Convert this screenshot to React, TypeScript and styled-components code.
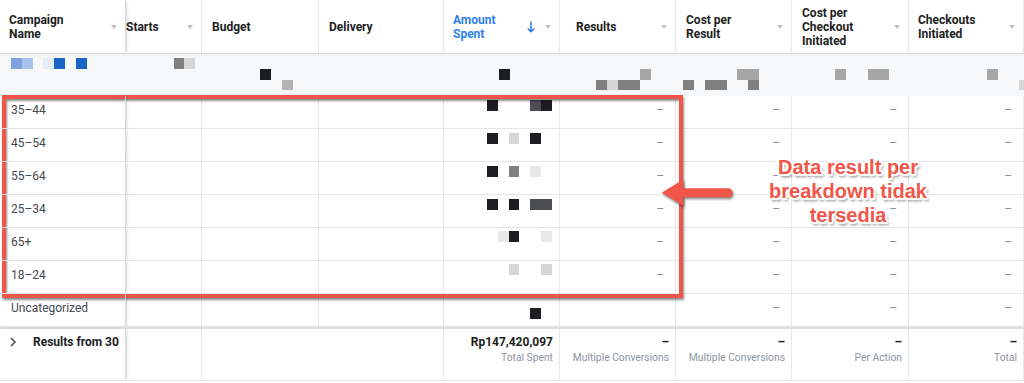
import React from 'react';
import styled, { createGlobalStyle } from 'styled-components';

const COLS = '126px 76px 117px 125px 116px 116px 116px 117px 115px';
const LINE = '#e5e6e9';
const ANNOT = '#f0564a';

const GlobalStyle = createGlobalStyle`
  html, body {
    margin: 0;
    padding: 0;
    background: #fff;
    font-family: Roboto, "Liberation Sans", Arial, sans-serif;
  }
`;

const Page = styled.div`
  position: relative;
  width: 1024px;
  height: 383px;
  overflow: hidden;
  background: #fff;
`;

const Row = styled.div`
  display: grid;
  grid-template-columns: ${COLS};
  box-sizing: border-box;
`;

const HeadRow = styled(Row)`
  height: 54px;
  border-bottom: 1px solid #dadde1;
  box-shadow: 0 1px 2px rgba(0, 0, 0, 0.06);
  position: relative;
  z-index: 2;
`;

const HeadCell = styled.div<{ $indent?: number; $frozen?: boolean }>`
  display: flex;
  align-items: center;
  padding: 0 8px 0 ${p => (p.$indent ?? 10)}px;
  border-right: 1px solid ${LINE};
  font-weight: 700;
  font-size: 12px;
  line-height: 14px;
  color: #1c1e21;
  overflow: hidden;
  white-space: nowrap;
  ${p => p.$frozen && 'box-shadow: 2px 0 2px -1px rgba(0,0,0,0.16); position: relative; z-index: 1; border-right-color: #d8dade;'}
`;

const HeadLabel = styled.span<{ $active?: boolean }>`
  flex: 1;
  color: ${p => (p.$active ? '#2f7fe8' : '#1c1e21')};
`;

const Caret = styled.span`
  width: 0;
  height: 0;
  border-left: 3.5px solid transparent;
  border-right: 3.5px solid transparent;
  border-top: 4px solid #bcc0c6;
  flex: none;
`;

const SortIcon = styled.svg`
  flex: none;
  margin-right: 10px;
`;

const CampaignRow = styled.div`
  height: 42px;
  box-sizing: border-box;
  padding-top: 4px;
  background: #f7f8fa;
  overflow: hidden;
`;

const Mosaic = styled.div<{ $cols: number; $top?: number }>`
  display: grid;
  grid-template-columns: repeat(${p => p.$cols}, 10.85px);
  grid-auto-rows: 10.8px;
  margin-top: ${p => p.$top ?? 0}px;
`;

const Tile = styled.span<{ $c: string }>`
  background: ${p => p.$c};
`;

const DataRow = styled(Row)`
  height: 33px;
`;

const Cell = styled.div<{ $right?: boolean; $frozen?: boolean }>`
  box-sizing: border-box;
  border-right: 1px solid ${LINE};
  border-bottom: 1px solid ${LINE};
  padding: 6px 11px 0;
  font-size: 12px;
  line-height: 16px;
  color: #444950;
  text-align: ${p => (p.$right ? 'right' : 'left')};
  white-space: nowrap;
  overflow: hidden;
  ${p => p.$frozen && 'box-shadow: 2px 0 2px -1px rgba(0,0,0,0.16); position: relative; z-index: 1; border-right-color: #d8dade;'}
`;

const AmountCell = styled(Cell)`
  display: flex;
  justify-content: flex-end;
  padding: 0 7px 0 0;
`;

const Dash = styled.span`
  color: #8d949e;
`;

const TotalRow = styled(Row)`
  height: 54px;
  border-top: 2px solid #dcdee2;
  border-bottom: 1px solid ${LINE};
  box-shadow: 0 -1px 2px rgba(0, 0, 0, 0.05);
`;

const TotalCell = styled.div<{ $span?: number; $frozen?: boolean }>`
  grid-column: span ${p => p.$span ?? 1};
  border-right: 1px solid ${LINE};
  padding: 5px 6px 0;
  text-align: right;
  overflow: hidden;
  white-space: nowrap;
  ${p => p.$frozen && 'box-shadow: 2px 0 2px -1px rgba(0,0,0,0.16); position: relative; z-index: 1; border-right-color: #d8dade; text-align: left; padding-left: 10px;'}
`;

const Figure = styled.div`
  font-weight: 700;
  font-size: 12px;
  line-height: 16px;
  color: #1c1e21;
`;

const SummaryTitle = styled.div`
  display: flex;
  align-items: center;
  gap: 17px;
  overflow: hidden;
  font-weight: 700;
  font-size: 12px;
  line-height: 16px;
  color: #1c1e21;
`;

const Chevron = styled.svg`
  flex: none;
`;

const Caption = styled.div`
  font-size: 10.3px;
  line-height: 16px;
  color: #8d949e;
`;

const RedBox = styled.div`
  position: absolute;
  left: 2px;
  top: 95px;
  width: 681px;
  height: 203px;
  box-sizing: border-box;
  border: 4px solid ${ANNOT};
  filter: drop-shadow(1px 2px 1px rgba(0, 0, 0, 0.45));
  pointer-events: none;
`;

const Arrow = styled.svg`
  position: absolute;
  left: 655px;
  top: 172px;
  filter: drop-shadow(1px 2px 1px rgba(0, 0, 0, 0.45));
`;

const Callout = styled.div`
  position: absolute;
  left: 748px;
  top: 155px;
  width: 200px;
  text-align: center;
  font-family: "Liberation Sans", Arial, sans-serif;
  font-weight: 700;
  font-size: 20px;
  line-height: 24px;
  color: ${ANNOT};
  text-shadow:
    -2px 0 0 #fff, 2px 0 0 #fff, 0 -2px 0 #fff, 0 2px 0 #fff,
    -1.5px -1.5px 0 #fff, 1.5px -1.5px 0 #fff, -1.5px 1.5px 0 #fff, 1.5px 1.5px 0 #fff,
    2px 3px 3px rgba(0, 0, 0, 0.55);
`;

const PALETTE: Record<string, string> = {
  K: '#1c1e21',
  D: '#4d4e52',
  M: '#808080',
  G: '#a6a6a6',
  S: '#b3b3b3',
  L: '#d6d6d6',
  W: '#e8e8e8',
  b: '#1b65c9',
  p: '#7da2de',
  q: '#a8c2ec',
  r: '#e4ecf8',
  '.': 'transparent',
};

const line = (n: number, marks: Record<number, string>) =>
  Array.from({ length: n }, (_, i) => marks[i] ?? '.').join('');

const CAMPAIGN_PIXELS = [
  line(95, { 1: 'p', 2: 'q', 4: 'r', 5: 'b', 7: 'b', 16: 'M', 17: 'L' }),
  line(95, { 24: 'K', 46: 'K', 59: 'G', 68: 'G', 69: 'G', 77: 'G', 80: 'G', 81: 'G', 91: 'G' }),
  line(95, { 26: 'S', 55: 'M', 56: 'L', 57: 'M', 58: 'M', 63: 'M', 65: 'M', 66: 'M', 69: 'M', 94: 'L' }),
];

const Pixels = ({ rows, top }: { rows: string[]; top?: number }) => (
  <Mosaic $cols={rows[0].length} $top={top}>
    {rows.join('').split('').map((ch, i) => (
      <Tile key={i} $c={PALETTE[ch]} />
    ))}
  </Mosaic>
);

const headers = [
  { lines: ['Campaign', 'Name'], caret: true, indent: 9 },
  { lines: ['Starts'], caret: true, indent: 0 },
  { lines: ['Budget'] },
  { lines: ['Delivery'] },
  { lines: ['Amount', 'Spent'], caret: true, active: true, indent: 9 },
  { lines: ['Results'], caret: true, indent: 16 },
  { lines: ['Cost per', 'Result'], caret: true },
  { lines: ['Cost per', 'Checkout', 'Initiated'], caret: true },
  { lines: ['Checkouts', 'Initiated'], caret: true, indent: 9 },
];

const breakdown = [
  { label: '35–44', pixels: 'K...DK', top: 4, dashes: [true, true, true, true] },
  { label: '45–54', pixels: 'K.L.K.', top: 4, dashes: [true, true, true, true] },
  { label: '55–64', pixels: 'K.M.W.', top: 4, dashes: [true, true, true, true] },
  { label: '25–34', pixels: 'K.K.DD', top: 4, dashes: [true, true, true, true] },
  { label: '65+', pixels: '.WK..W', top: 3, dashes: [true, true, true, true] },
  { label: '18–24', pixels: '..L..L', top: 3, dashes: [true, true, true, true] },
  { label: 'Uncategorized', pixels: '....K.', top: 14, dashes: [false, true, true, true] },
];

const totals = [
  { value: '–', caption: 'Multiple Conversions' },
  { value: '–', caption: 'Multiple Conversions' },
  { value: '–', caption: 'Per Action' },
  { value: '–', caption: 'Total' },
];

export default function App() {
  return (
    <Page>
      <GlobalStyle />
      <HeadRow>
        {headers.map((h, i) => (
          <HeadCell key={i} $indent={h.indent} $frozen={i === 0}>
            <HeadLabel $active={h.active}>
              {h.lines.map((l, j) => (
                <div key={j}>{l}</div>
              ))}
            </HeadLabel>
            {h.active && (
              <SortIcon width="8" height="12" viewBox="0 0 8 12">
                <path d="M4 0.5V10.8M0.8 7.6L4 10.8L7.2 7.6" fill="none" stroke="#2f7fe8" strokeWidth="1.5" />
              </SortIcon>
            )}
            {h.caret && <Caret />}
          </HeadCell>
        ))}
      </HeadRow>

      <CampaignRow>
        <Pixels rows={CAMPAIGN_PIXELS} />
      </CampaignRow>

      {breakdown.map(r => (
        <DataRow key={r.label}>
          <Cell $frozen>{r.label}</Cell>
          <Cell />
          <Cell />
          <Cell />
          <AmountCell>
            <Pixels rows={[r.pixels]} top={r.top} />
          </AmountCell>
          {r.dashes.map((d, i) => (
            <Cell key={i} $right>
              {d && <Dash>–</Dash>}
            </Cell>
          ))}
        </DataRow>
      ))}

      <TotalRow>
        <TotalCell $frozen>
          <SummaryTitle>
            <Chevron width="6" height="10" viewBox="0 0 6 10">
              <path d="M1 1L5 5L1 9" fill="none" stroke="#444950" strokeWidth="1.5" />
            </Chevron>
            <span>Results from 30 campaigns</span>
          </SummaryTitle>
        </TotalCell>
        <TotalCell />
        <TotalCell $span={2} />
        <TotalCell>
          <Figure>Rp147,420,097</Figure>
          <Caption>Total Spent</Caption>
        </TotalCell>
        {totals.map((t, i) => (
          <TotalCell key={i}>
            <Figure>{t.value}</Figure>
            <Caption>{t.caption}</Caption>
          </TotalCell>
        ))}
      </TotalRow>

      <RedBox />
      <Arrow width="85" height="42" viewBox="0 0 85 42">
        <path
          d="M6.7 20.7L28.5 7.3V16.2H73.2A4.5 4.5 0 0 1 73.2 25.2H28.5V34.1Z"
          fill={ANNOT}
        />
      </Arrow>
      <Callout>
        Data result per
        <br />
        breakdown tidak
        <br />
        tersedia
      </Callout>
    </Page>
  );
}
